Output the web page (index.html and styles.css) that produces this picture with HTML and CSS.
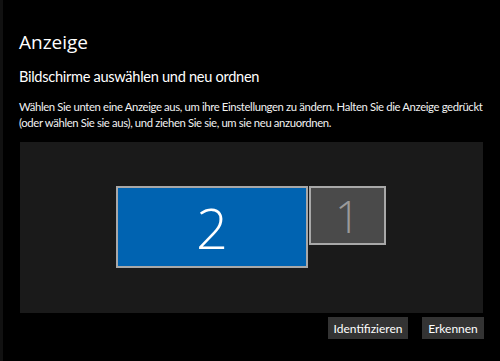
FILE: index.html
```html
<!DOCTYPE html>
<html lang="de">
<head>
<meta charset="utf-8">
<link rel="stylesheet" href="styles.css">
</head>
<body>
<div class="page">
  <h1 class="title">Anzeige</h1>
  <h2 class="subtitle">Bildschirme auswählen und neu ordnen</h2>
  <p class="desc">Wählen Sie unten eine Anzeige aus, um ihre Einstellungen zu ändern. Halten Sie die Anzeige gedrückt<br>(oder wählen Sie sie aus), und ziehen Sie sie, um sie neu anzuordnen.</p>
  <div class="canvas">
    <div class="monitor monitor-2">2</div>
    <div class="monitor monitor-1">1</div>
  </div>
  <div class="actions">
    <button class="btn btn-id">Identifizieren</button>
    <button class="btn btn-er">Erkennen</button>
  </div>
</div>
</body>
</html>
```

FILE: styles.css
```css
html, body {
  margin: 0;
  padding: 0;
  background: #000;
  height: 100%;
}
body {
  font-family: "Lato", "Open Sans", sans-serif;
  color: #fff;
  overflow: hidden;
}
.page {
  border-left: 3px solid #111;
  height: 100%;
  box-sizing: border-box;
  padding: 0 16px 0 16px;
}
.title {
  margin: 0;
  padding-top: 29px;
  font-family: "Open Sans", sans-serif;
  font-size: 19px;
  font-weight: 400;
  line-height: 26px;
}
.subtitle {
  margin: 12px 0 0 0;
  font-size: 14.6px;
  letter-spacing: -0.3px;
  font-weight: 400;
  line-height: 20px;
}
.desc {
  margin: 12px 0 0 0;
  font-size: 11.3px;
  letter-spacing: -0.36px;
  line-height: 16px;
  white-space: nowrap;
  color: #f2f2f2;
}
.canvas {
  position: relative;
  margin: 11px 0 0 1px;
  width: 463px;
  height: 171px;
  background: #1a1a1a;
}
.monitor {
  position: absolute;
  box-sizing: border-box;
  border: 2px solid #a8a8a8;
  display: flex;
  align-items: center;
  justify-content: center;
  font-family: "Open Sans", sans-serif;
  font-weight: 300;
}
.monitor-2 {
  left: 96px;
  top: 44px;
  width: 192px;
  height: 82px;
  background: #0063b1;
  color: #fff;
  font-size: 56px;
}
.monitor-1 {
  left: 289px;
  top: 44px;
  width: 77px;
  height: 59px;
  background: #4a4a4a;
  color: #9a9a9a;
  font-size: 44px;
}
.actions {
  display: flex;
  justify-content: flex-end;
  gap: 14px;
  width: 465px;
  margin-top: 4px;
}
.btn {
  font-family: "Lato", sans-serif;
  font-size: 12px;
  color: #fff;
  background: #333;
  border: none;
  height: 22px;
  padding: 0;
  margin: 0;
}
.btn-id { width: 80px; }
.btn-er { width: 62px; }
```
